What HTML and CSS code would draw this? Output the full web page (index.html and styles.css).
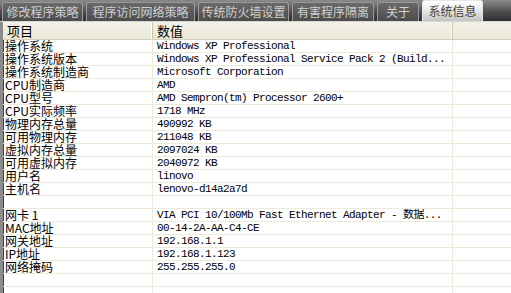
FILE: index.html
```html
<!DOCTYPE html>
<html lang="zh-CN">
<head>
    <meta charset="UTF-8">
    <title>系统信息</title>
    <link rel="stylesheet" href="styles.css">
</head>
<body>
    <div class="window">
        <div class="tabs">
            <div class="tab" style="width: 81px">修改程序策略</div>
            <div class="tab" style="width: 109px">程序访问网络策略</div>
            <div class="tab" style="width: 91px">传统防火墙设置</div>
            <div class="tab" style="width: 82px">有害程序隔离</div>
            <div class="tab" style="width: 42px">关于</div>
            <div class="tab active" style="width: 61px">系统信息</div>
        </div>
        <div class="list">
            <div class="head">
                <div class="cell c1">项目</div>
                <div class="cell c2">数值</div>
                <div class="cell c3"></div>
            </div>
            <div class="row"><div class="cell c1">操作系统</div><div class="cell c2">Windows XP Professional</div><div class="cell c3"></div></div>
            <div class="row"><div class="cell c1">操作系统版本</div><div class="cell c2">Windows XP Professional Service Pack 2 (Build...</div><div class="cell c3"></div></div>
            <div class="row"><div class="cell c1">操作系统制造商</div><div class="cell c2">Microsoft Corporation</div><div class="cell c3"></div></div>
            <div class="row"><div class="cell c1">CPU制造商</div><div class="cell c2">AMD</div><div class="cell c3"></div></div>
            <div class="row"><div class="cell c1">CPU型号</div><div class="cell c2">AMD Sempron(tm) Processor 2600+</div><div class="cell c3"></div></div>
            <div class="row"><div class="cell c1">CPU实际频率</div><div class="cell c2">1718 MHz</div><div class="cell c3"></div></div>
            <div class="row"><div class="cell c1">物理内存总量</div><div class="cell c2">490992 KB</div><div class="cell c3"></div></div>
            <div class="row"><div class="cell c1">可用物理内存</div><div class="cell c2">211048 KB</div><div class="cell c3"></div></div>
            <div class="row"><div class="cell c1">虚拟内存总量</div><div class="cell c2">2097024 KB</div><div class="cell c3"></div></div>
            <div class="row"><div class="cell c1">可用虚拟内存</div><div class="cell c2">2040972 KB</div><div class="cell c3"></div></div>
            <div class="row"><div class="cell c1">用户名</div><div class="cell c2">linovo</div><div class="cell c3"></div></div>
            <div class="row"><div class="cell c1">主机名</div><div class="cell c2">lenovo-d14a2a7d</div><div class="cell c3"></div></div>
            <div class="row"><div class="cell c1"></div><div class="cell c2"></div><div class="cell c3"></div></div>
            <div class="row"><div class="cell c1">网卡 1</div><div class="cell c2">VIA PCI 10/100Mb Fast Ethernet Adapter - 数据...</div><div class="cell c3"></div></div>
            <div class="row"><div class="cell c1">MAC地址</div><div class="cell c2">00-14-2A-AA-C4-CE</div><div class="cell c3"></div></div>
            <div class="row"><div class="cell c1">网关地址</div><div class="cell c2">192.168.1.1</div><div class="cell c3"></div></div>
            <div class="row"><div class="cell c1">IP地址</div><div class="cell c2">192.168.1.123</div><div class="cell c3"></div></div>
            <div class="row"><div class="cell c1">网络掩码</div><div class="cell c2">255.255.255.0</div><div class="cell c3"></div></div>
            <div class="row"><div class="cell c1"></div><div class="cell c2"></div><div class="cell c3"></div></div>
            <div class="row"><div class="cell c1"></div><div class="cell c2"></div><div class="cell c3"></div></div>
        </div>
    </div>
</body>
</html>
```

FILE: styles.css
```css
body {
    margin: 0;
    width: 511px;
    height: 293px;
    overflow: hidden;
    background-color: #fff;
    font-family: "Noto Sans CJK SC", sans-serif;
    font-size: 12px;
    color: #000;
}
.window {
    display: flex;
    flex-direction: column;
    height: 293px;
}
.tabs {
    display: flex;
    align-items: flex-end;
    gap: 3px;
    height: 22px;
    flex: none;
    padding-left: 2px;
    box-sizing: border-box;
    background: linear-gradient(#8a8a8a, #4a4a4a 60%, #303030);
    border-bottom: 1px solid #d8d8d8;
}
.tab {
    height: 19px;
    box-sizing: border-box;
    border: 1px solid #9a9a9a;
    border-bottom: none;
    border-radius: 3px 3px 0 0;
    background: linear-gradient(#6a6a6a, #4c4c4c);
    color: #d0d0d0;
    font-size: 12px;
    line-height: 17px;
    text-align: center;
    white-space: nowrap;
}
.tab.active {
    height: 21px;
    border-color: #e8e8e8;
    background: linear-gradient(#ffffff, #e6e6e6 50%, #c4c4c4);
    color: #404040;
    line-height: 19px;
}
.list {
    flex: 1;
    border-left: 3px solid #8c8c8c;
    box-shadow: inset 1px 0 0 #404040;
    overflow: hidden;
}
.head,
.row {
    display: flex;
}
.cell {
    box-sizing: border-box;
    white-space: nowrap;
    flex: none;
}
.c1 {
    width: 150px;
}
.c2 {
    width: 300px;
}
.c3 {
    flex: 1;
}
.head {
    height: 18px;
    box-sizing: border-box;
    background: linear-gradient(#f3f2e8, #ebe9d8);
    border-bottom: 1px solid #d4d0bc;
}
.head .cell {
    padding-left: 4px;
    border-right: 1px solid #c8c4ae;
    box-shadow: inset -1px 0 0 #fff;
    font-size: 13px;
    line-height: 17px;
}
.head .c3 {
    border-right: none;
    box-shadow: none;
}
.row {
    height: 13px;
    border-bottom: 1px solid #ecead8;
    box-sizing: border-box;
}
.row .cell {
    height: 12px;
    line-height: 12px;
    padding-left: 2px;
    border-right: 1px solid #ecead8;
}
.row .c2 {
    padding-left: 4px;
    font-family: "Liberation Mono", "Noto Sans CJK SC", monospace;
    font-size: 11px;
    letter-spacing: -0.6px;
    overflow: hidden;
}
.row .c3 {
    border-right: none;
}
```
